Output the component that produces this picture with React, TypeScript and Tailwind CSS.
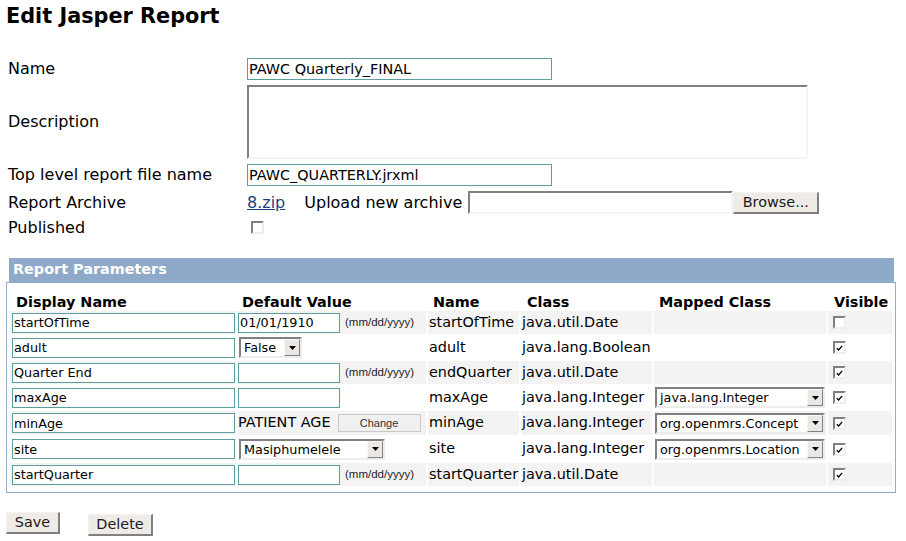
type Def =
  | { kind: "date"; value: string }
  | { kind: "text" }
  | { kind: "select"; value: string; width: string }
  | { kind: "concept" };

type Param = {
  display: string;
  def: Def;
  name: string;
  cls: string;
  mapped?: string;
  visible: boolean;
};

const params: Param[] = [
  { display: "startOfTime", def: { kind: "date", value: "01/01/1910" }, name: "startOfTime", cls: "java.util.Date", visible: false },
  { display: "adult", def: { kind: "select", value: "False", width: "w-[63px]" }, name: "adult", cls: "java.lang.Boolean", visible: true },
  { display: "Quarter End", def: { kind: "date", value: "" }, name: "endQuarter", cls: "java.util.Date", visible: true },
  { display: "maxAge", def: { kind: "text" }, name: "maxAge", cls: "java.lang.Integer", mapped: "java.lang.Integer", visible: true },
  { display: "minAge", def: { kind: "concept" }, name: "minAge", cls: "java.lang.Integer", mapped: "org.openmrs.Concept", visible: true },
  { display: "site", def: { kind: "select", value: "Masiphumelele", width: "w-[146px]" }, name: "site", cls: "java.lang.Integer", mapped: "org.openmrs.Location", visible: true },
  { display: "startQuarter", def: { kind: "date", value: "" }, name: "startQuarter", cls: "java.util.Date", visible: true },
];

function Select({ value, width }: { value: string; width: string }) {
  return (
    <div className={`flex h-[21px] items-center border-2 border-t-[#808080] border-l-[#808080] border-r-[#ececec] border-b-[#ececec] bg-white ${width}`}>
      <span className="flex-1 whitespace-nowrap pl-[3px] text-[12.8px] leading-[15px]">{value}</span>
      <span className="flex h-[17px] w-[16px] shrink-0 items-center justify-center border border-t-[#f8f8f8] border-l-[#f8f8f8] border-r-[#808080] border-b-[#808080] bg-[#ebe8e3]">
        <svg width="7" height="4" viewBox="0 0 7 4">
          <path d="M0 0h7L3.5 4z" fill="#000" />
        </svg>
      </span>
    </div>
  );
}

function Check({ on }: { on?: boolean }) {
  return (
    <span className="flex h-[13px] w-[13px] items-end justify-center border-2 border-t-[#808080] border-l-[#808080] border-r-[#eeeeee] border-b-[#eeeeee] bg-white pb-[1px]">
      {on && (
        <svg width="7" height="6" viewBox="0 0 7 6">
          <path d="M0.8 3.2l1.8 1.8 3.6-4.2" stroke="#000" strokeWidth="1.3" fill="none" />
        </svg>
      )}
    </span>
  );
}

function Button({ label, width }: { label: string; width: string }) {
  return (
    <button className={`h-[22px] border border-t-[#f4f2ef] border-l-[#f4f2ef] border-r-2 border-b-2 border-r-[#808080] border-b-[#808080] bg-[#efebe7] text-[14.4px] leading-[17px] text-[#1a1a1a] ${width}`}>
      {label}
    </button>
  );
}

function TextBox({ value, width }: { value: string; width: string }) {
  return (
    <input
      readOnly
      value={value}
      className={`h-[22px] border border-[#5f9ea0] bg-white px-[1px] text-[14.4px] text-black outline-none ${width}`}
    />
  );
}

function DefaultCell({ def }: { def: Def }) {
  if (def.kind === "date") {
    return (
      <div className="flex items-center">
        <input readOnly value={def.value} className="h-[20px] w-[102px] border border-[#5f9ea0] bg-white px-[1px] text-[12.8px] outline-none" />
        <span className="ml-[5px] font-['Liberation_Sans',sans-serif] text-[11.5px] text-[#222]">(mm/dd/yyyy)</span>
      </div>
    );
  }
  if (def.kind === "text") {
    return <input readOnly value="" className="h-[20px] w-[102px] border border-[#5f9ea0] bg-white outline-none" />;
  }
  if (def.kind === "select") {
    return (
      <div className="pl-[1px]">
        <Select value={def.value} width={def.width} />
      </div>
    );
  }
  return (
    <div className="flex items-center">
      <span>PATIENT AGE</span>
      <span className="ml-[7px] flex h-[18px] w-[83px] items-center justify-center border border-[#c8c8c8] bg-[#f0f0f0] font-['Liberation_Sans',sans-serif] text-[11px] text-[#333]">
        Change
      </span>
    </div>
  );
}

export default function App() {
  return (
    <div className="min-h-[541px] bg-white px-[6px] pt-[5px] font-['DejaVu_Sans',sans-serif] text-black">
      <h1 className="text-[20.8px] font-bold leading-[23px]">Edit Jasper Report</h1>

      {/* report fields */}
      <div className="mt-[30px] flex flex-col gap-[5px] text-[16px]">
        <div className="flex h-[22px] items-center">
          <div className="w-[241px] pl-[2px]">Name</div>
          <TextBox value="PAWC Quarterly_FINAL" width="w-[305px]" />
        </div>
        <div className="flex h-[74px] items-center">
          <div className="w-[241px] pl-[2px]">Description</div>
          <div className="h-[74px] w-[561px] border-2 border-t-[#808080] border-l-[#808080] border-r-[#f4f4f4] border-b-[#f4f4f4] bg-white" />
        </div>
        <div className="flex h-[22px] items-center">
          <div className="w-[241px] pl-[2px]">Top level report file name</div>
          <TextBox value="PAWC_QUARTERLY.jrxml" width="w-[305px]" />
        </div>
        <div className="flex h-[23px] items-center">
          <div className="w-[241px] pl-[2px]">Report Archive</div>
          <a className="text-[#1a4280] underline">8.zip</a>
          <span className="ml-[19px]">Upload new archive</span>
          <div className="ml-[6px] h-[23px] w-[265px] border-2 border-t-[#808080] border-l-[#808080] border-r-[#f4f4f4] border-b-[#f4f4f4] bg-white" />
          <Button label="Browse..." width="w-[86px]" />
        </div>
        <div className="flex h-[17px] items-center">
          <div className="w-[241px] pl-[2px]">Published</div>
          <span className="ml-[4px]">
            <Check />
          </span>
        </div>
      </div>

      {/* parameters */}
      <div className="mt-[22px] ml-[3px] flex h-[24px] w-[885px] items-center bg-[#8fa9c8] pl-[4px] text-[14.4px] font-bold text-white">
        Report Parameters
      </div>
      <div className="w-[890px] border border-[#92abc8] px-[3px] pt-[2px] pb-[6px] text-[14.4px]">
        <div className="grid grid-cols-[226px_188px_91px_131px_172px_64px] gap-[2px]">
          <div className="flex h-[24px] items-end pl-[6px] font-bold leading-[13px]">Display Name</div>
          <div className="flex h-[24px] items-end pl-[4px] font-bold leading-[13px]">Default Value</div>
          <div className="flex h-[24px] items-end pl-[5px] font-bold leading-[13px]">Name</div>
          <div className="flex h-[24px] items-end pl-[6px] font-bold leading-[13px]">Class</div>
          <div className="flex h-[24px] items-end pl-[5px] font-bold leading-[13px]">Mapped Class</div>
          <div className="flex h-[24px] items-end pl-[6px] font-bold leading-[13px]">Visible</div>

          {params.map((p, i) => {
            const bg = i % 2 === 0 ? "bg-[#f3f3f3]" : "bg-white";
            const h = i === 4 || i === 5 ? "h-[24px]" : "h-[23px]";
            return (
              <div key={p.name} className="contents">
                <div className={`flex items-center pl-[2px] ${h} ${bg}`}>
                  <input readOnly value={p.display} className="h-[20px] w-[223px] border border-[#5f9ea0] bg-white px-[1px] text-[12.8px] outline-none" />
                </div>
                <div className={`flex items-center ${h} ${bg}`}>
                  <DefaultCell def={p.def} />
                </div>
                <div className={`flex items-center pl-[1px] ${h} ${bg}`}>{p.name}</div>
                <div className={`flex items-center pl-[1px] ${h} ${bg}`}>{p.cls}</div>
                <div className={`flex items-center pl-[1px] ${h} ${bg}`}>
                  {p.mapped && <Select value={p.mapped} width="w-[170px]" />}
                </div>
                <div className={`flex items-center pl-[5px] ${h} ${bg}`}>
                  <Check on={p.visible} />
                </div>
              </div>
            );
          })}
        </div>
      </div>

      <div className="mt-[19px] flex">
        <Button label="Save" width="w-[54px]" />
        <span className="ml-[28px]">
          <Button label="Delete" width="w-[65px]" />
        </span>
      </div>
    </div>
  );
}
